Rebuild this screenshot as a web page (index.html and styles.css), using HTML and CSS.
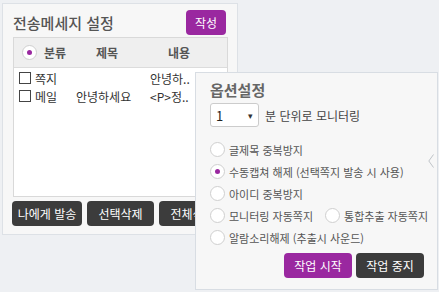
FILE: index.html
```html
<!DOCTYPE html>
<html lang="ko">
<head>
  <meta charset="UTF-8">
  <title>전송메세지 설정</title>
  <link rel="stylesheet" href="styles.css">
</head>
<body>
  <!-- Panneau principal -->
  <div class="panel">
    <div class="panelHead">
      <h2>전송메세지 설정</h2>
      <button class="btn purple small">작성</button>
    </div>

    <div class="msgTable">
      <div class="msgHeader">
        <span class="radio on"></span>
        <span class="colType">분류</span>
        <span class="colTitle">제목</span>
        <span class="colBody">내용</span>
      </div>
      <div class="msgRows">
        <div class="msgRow">
          <span class="check"></span>
          <span class="cellType">쪽지</span>
          <span class="cellTitle"></span>
          <span class="cellBody">안녕하..</span>
        </div>
        <div class="msgRow">
          <span class="check"></span>
          <span class="cellType">메일</span>
          <span class="cellTitle">안녕하세요</span>
          <span class="cellBody">&lt;P&gt;정..</span>
        </div>
      </div>
    </div>

    <div class="btnRow">
      <button class="btn dark">나에게 발송</button>
      <button class="btn dark">선택삭제</button>
      <button class="btn dark">전체삭제</button>
    </div>
  </div>

  <!-- Fenêtre d'options par-dessus -->
  <div class="options">
    <h3>옵션설정</h3>
    <div class="interval">
      <div class="selectBox"><span>1</span><span class="caret">▾</span></div>
      <span>분 단위로 모니터링</span>
    </div>

    <div class="optList">
      <label class="opt"><span class="radio"></span>글제목 중복방지</label>
      <label class="opt"><span class="radio on"></span>수동캡쳐 해제 (선택쪽지 발송 시 사용)</label>
      <label class="opt"><span class="radio"></span>아이디 중복방지</label>
      <div class="optPair">
        <label class="opt"><span class="radio"></span>모니터링 자동쪽지</label>
        <label class="opt"><span class="radio"></span>통합추출 자동쪽지</label>
      </div>
      <label class="opt"><span class="radio"></span>알람소리해제 (추출시 사운드)</label>
    </div>

    <div class="jobBtns">
      <button class="btn purple">작업 시작</button>
      <button class="btn dark">작업 중지</button>
    </div>

    <svg class="sideArrow" width="6" height="14" viewBox="0 0 6 14">
      <polyline points="5.5,0.5 0.8,7 5.5,13.5" fill="none" stroke="#bfc3c8" stroke-width="1"/>
    </svg>
  </div>
</body>
</html>
```

FILE: styles.css
```css
* {
  box-sizing: border-box;
  font-family: "Noto Sans CJK KR", "Noto Sans", sans-serif;
}
body {
  margin: 0;
  width: 439px;
  height: 292px;
  background-color: #eef0f3;
  position: relative;
  overflow: hidden;
  color: #444;
}

/* Boutons */
.btn {
  border: none;
  border-radius: 4px;
  color: white;
  font-size: 12px;
  height: 25px;
  padding: 0;
  cursor: pointer;
}
.purple {
  background-color: #9a28a0;
}
.dark {
  background-color: #3c3c3c;
}
.small {
  width: 40px;
}

/* Panneau principal */
.panel {
  margin: 3px 0 0 2px;
  width: 236px;
  height: 232px;
  background-color: #f7f7f7;
  border: 1px solid #dde1e6;
}
.panelHead {
  display: flex;
  justify-content: space-between;
  align-items: center;
  padding: 4px 11px 0 10px;
  height: 33px;
}
.panelHead h2 {
  margin: 0;
  font-size: 15px;
  font-weight: 500;
  color: #555;
}

/* Tableau des messages */
.msgTable {
  margin: 0 9px 0 10px;
  border: 1px solid #d9d9d9;
  background: white;
}
.msgHeader {
  height: 30px;
  display: flex;
  align-items: center;
  background-color: #efefef;
  border-bottom: 1px solid #dcdcdc;
  padding-left: 8px;
  font-size: 12px;
  font-weight: 700;
  color: #555;
}
.colType { margin-left: 7px; width: 52px; }
.colTitle { width: 72px; }

.msgRows {
  height: 128px;
  padding-top: 1px;
}
.msgRow {
  display: flex;
  align-items: center;
  height: 18px;
  font-size: 12px;
  color: #333;
  padding-left: 5px;
}
.check {
  width: 12px;
  height: 12px;
  border: 1px solid #444;
  margin-right: 4px;
}
.cellType { width: 41px; }
.cellTitle { width: 74px; }

.btnRow {
  display: flex;
  gap: 5px;
  padding: 4px 0 0 9px;
}
.btnRow .btn {
  width: 67px;
  flex-shrink: 0;
}
.btnRow .btn:first-child {
  width: 70px;
}

/* Bouton radio */
.radio {
  display: inline-block;
  position: relative;
  width: 15px;
  height: 15px;
  border-radius: 50%;
  border: 1px solid #cfcfcf;
  background: white;
  flex-shrink: 0;
}
.radio.on::after {
  content: "";
  position: absolute;
  left: 4px;
  top: 4px;
  width: 5px;
  height: 5px;
  border-radius: 50%;
  background-color: #9a28a0;
}

/* Fenêtre d'options */
.options {
  position: absolute;
  left: 195px;
  top: 72px;
  width: 243px;
  height: 218px;
  background-color: #f7f7f7;
  border: 1px solid #d8dde3;
  padding: 6px 0 0 14px;
}
.options h3 {
  margin: 0;
  font-size: 15px;
  font-weight: 700;
  color: #666;
  height: 24px;
}
.interval {
  display: flex;
  align-items: center;
  gap: 6px;
  font-size: 12px;
  color: #444;
}
.selectBox {
  width: 49px;
  height: 24px;
  border: 1px solid #ccc;
  border-radius: 3px;
  background: white;
  display: flex;
  align-items: center;
  justify-content: space-between;
  padding: 0 5px;
  font-size: 13px;
  color: #222;
}
.caret {
  font-size: 9px;
  color: #333;
}
.optList {
  display: flex;
  flex-direction: column;
  gap: 7px;
  margin-top: 15px;
}
.opt {
  display: flex;
  align-items: center;
  gap: 4px;
  height: 15px;
  font-size: 11px;
  color: #555;
  white-space: nowrap;
}
.optPair {
  display: flex;
  gap: 12px;
}
.jobBtns {
  display: flex;
  gap: 4px;
  justify-content: flex-end;
  margin: 8px 13px 0 0;
}
.jobBtns .btn {
  width: 68px;
  height: 25px;
  font-size: 12px;
}
.sideArrow {
  position: absolute;
  right: 3px;
  top: 81px;
}
```
